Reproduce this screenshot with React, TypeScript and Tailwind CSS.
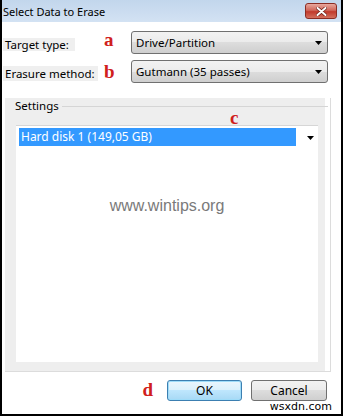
import React from "react";

const ui = { fontFamily: '"Noto Sans", "Open Sans", sans-serif' };
const mark = { fontFamily: '"Liberation Serif", serif' };

function Arrow() {
  return (
    <svg width="7" height="4" viewBox="0 0 7 4">
      <path d="M0 0H7L3.5 4Z" fill="#000" />
    </svg>
  );
}

function Combo({ value }: { value: string }) {
  return (
    <div className="flex h-[23px] w-[197px] items-center justify-between rounded-[3px] border border-[#707070] bg-[linear-gradient(#f2f2f2,#ebebeb_50%,#dddddd_50%,#cfcfcf)] pl-[4px] pr-[5px] text-[11.5px] text-black">
      <span>{value}</span>
      <Arrow />
    </div>
  );
}

function Letter({ children, className }: { children: string; className?: string }) {
  return (
    <span
      className={`text-[19px] font-bold leading-[18px] text-[#d0201c] ${className ?? ""}`}
      style={mark}
    >
      {children}
    </span>
  );
}

export default function App() {
  return (
    <div
      className="flex h-[416px] w-[343px] flex-col border-x-2 border-b-2 border-black bg-white"
      style={ui}
    >
      {/* title bar */}
      <div className="flex h-[22px] shrink-0 items-start justify-between bg-[linear-gradient(#c2d6ec,#d3e2f3)] pl-[1px] pr-[4px] pt-[2px]">
        <span className="text-[11px] leading-[20px] text-black">Select Data to Erase</span>
        <div className="mt-[1px] flex h-[16px] w-[32px] items-center justify-center rounded-[3px] border border-[#8b2d24] bg-[linear-gradient(#e8a89e,#d0675a_45%,#c13a2c_55%,#d3705e)]">
          <svg width="11" height="9" viewBox="0 0 11 9">
            <path d="M1.5 1L9.5 8M9.5 1L1.5 8" stroke="#6b1e16" strokeWidth="3.4" strokeLinecap="round" />
            <path d="M1.5 1L9.5 8M9.5 1L1.5 8" stroke="#fff" strokeWidth="2" strokeLinecap="round" />
          </svg>
        </div>
      </div>

      {/* rows */}
      <div className="mt-[9px] flex h-[23px] items-center">
        <div className="w-[102px] pl-[1px]">
          <span className="inline-block h-[13px] w-[72px] bg-[#efefef] pl-[2px] text-[11.5px] leading-[13px] text-black">
            Target type:
          </span>
        </div>
        <div className="w-[27px] self-start -mt-[3px]">
          <Letter>a</Letter>
        </div>
        <Combo value="Drive/Partition" />
      </div>

      <div className="mt-[6px] flex h-[23px] items-center">
        <div className="w-[102px] pl-[1px]">
          <span className="inline-block h-[15px] w-[95px] bg-[#efefef] pl-[2px] text-[11.5px] leading-[15px] text-black">
            Erasure method:
          </span>
        </div>
        <div className="w-[27px] self-start">
          <Letter>b</Letter>
        </div>
        <Combo value="Gutmann (35 passes)" />
      </div>

      {/* settings group */}
      <div className="relative ml-[3px] mt-[15px] flex h-[274px] w-[326px] flex-col border-b border-r border-[#dcdcdc] bg-[linear-gradient(to_right,#eeeeee_320px,#ffffff_320px)]">
        <div className="flex h-[16px] items-center pl-[10px] pr-[2px]">
          <span className="text-[11.5px] leading-[16px] text-black">Settings</span>
          <div className="ml-[3px] h-px flex-1 bg-[#d5d5d5]" />
        </div>

        <Letter className="absolute left-[225px] top-[11px]">c</Letter>

        <div className="ml-[11px] mt-[11px] flex h-[237px] w-[302px] flex-col border-t border-[#d6d6d6] bg-white">
          <div className="flex items-center pl-[3px] pt-[2px]">
            <div className="h-[18px] w-[277px] bg-[#3399ff] pl-[2px] text-[12px] leading-[18px] text-white">
              Hard disk 1 (149,05 GB)
            </div>
            <div className="ml-[11px] mt-[1px] flex">
              <Arrow />
            </div>
          </div>
          <div
            className="mt-[51px] text-center text-[16px] leading-[18px] text-[#7a7a7a]"
            style={{ fontFamily: '"Liberation Sans", Arial, sans-serif' }}
          >
            www.wintips.org
          </div>
        </div>
      </div>

      {/* buttons */}
      <div className="mr-[14px] mt-[8px] flex items-start justify-end">
        <Letter className="mr-[14px] mt-[1px]">d</Letter>
        <button className="h-[21px] w-[75px] rounded-[3px] border border-[#3c7fb1] bg-[linear-gradient(#eaf6fd,#d9f0fc_50%,#bee6fd_50%,#a7d9f5)] text-[12px] leading-[19px] text-black shadow-[inset_0_0_0_1px_#9fdcf9]">
          OK
        </button>
        <button className="ml-[9px] h-[21px] w-[76px] rounded-[3px] border border-[#707070] bg-[linear-gradient(#f2f2f2,#ebebeb_50%,#dddddd_50%,#cfcfcf)] text-[12px] leading-[19px] text-black">
          Cancel
        </button>
      </div>

      <div className="mr-[9px] flex justify-end">
        <span
          className="text-[11px] leading-[12px] text-black"
          style={{ fontFamily: '"DejaVu Sans", sans-serif' }}
        >
          wsxdn.com
        </span>
      </div>
    </div>
  );
}
